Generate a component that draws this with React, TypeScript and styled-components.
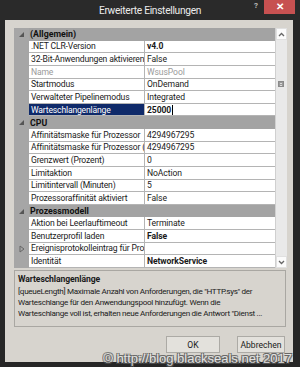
import React from "react";
import styled, { createGlobalStyle } from "styled-components";

const UI = `Roboto, "Liberation Sans", sans-serif`;

const Global = createGlobalStyle`
  html, body { margin: 0; padding: 0; background: #242424; }
  * { box-sizing: border-box; }
`;

const Window = styled.div`
  position: relative;
  width: 300px;
  height: 367px;
  background: #262626;
  display: flex;
  flex-direction: column;
  font-family: ${UI};
  overflow: hidden;
`;

const TitleBar = styled.div`
  height: 20px;
  display: flex;
  align-items: flex-start;
  background: #2a2a2a;
  padding-left: 52px;
`;

const Title = styled.div`
  flex: 1;
  text-align: center;
  color: #ececec;
  font-size: 10.2px;
  letter-spacing: -0.3px;
  line-height: 22px;
`;

const HelpBtn = styled.div`
  width: 16px;
  height: 14px;
  color: #bbb;
  font-size: 8px;
  font-weight: bold;
  text-align: center;
  line-height: 12px;
`;

const CloseBtn = styled.div`
  width: 31px;
  height: 14px;
  margin-right: 5px;
  background: #c75151;
  color: #fff;
  font-size: 10px;
  font-weight: bold;
  text-align: center;
  line-height: 14px;
`;

const Client = styled.div`
  flex: 1;
  margin: 0 7px 5px 5px;
  background: #d7d4ce;
  padding: 8px 6px 0 9px;
  display: flex;
  flex-direction: column;
`;

const Grid = styled.div`
  height: 240px;
  display: flex;
  background: #a6a6a6;
`;

const Rows = styled.div`
  flex: 1;
  display: flex;
  flex-direction: column;
`;

const Row = styled.div`
  flex: 1;
  display: flex;
  min-height: 0;
`;

const Strip = styled.div`
  width: 15px;
  display: flex;
  align-items: center;
  justify-content: center;
`;

const CatLabel = styled.div`
  flex: 1;
  font-size: 8.8px;
  font-weight: bold;
  color: #111;
  display: flex;
  align-items: center;
  padding-left: 1px;
  background: #a3a3a3;
`;

const NameCell = styled.div<{ $sel?: boolean; $dim?: boolean }>`
  width: 116px;
  font-size: 8.6px;
  letter-spacing: -0.17px;
  display: flex;
  align-items: center;
  padding-left: 2px;
  white-space: nowrap;
  overflow: hidden;
  background: ${(p) => (p.$sel ? "#0f2a6a" : "#fff")};
  color: ${(p) => (p.$sel ? "#fff" : p.$dim ? "#9a9a9a" : "#1a1a1a")};
  border-bottom: 1px solid #b4b4b4;
  border-right: 1px solid #b4b4b4;
`;

const ValueCell = styled.div<{ $bold?: boolean; $dim?: boolean }>`
  flex: 1;
  font-size: 8.6px;
  letter-spacing: -0.1px;
  display: flex;
  align-items: center;
  padding-left: 2px;
  white-space: nowrap;
  overflow: hidden;
  background: #fff;
  font-weight: ${(p) => (p.$bold ? "bold" : "normal")};
  color: ${(p) => (p.$dim ? "#9a9a9a" : "#1a1a1a")};
  border-bottom: 1px solid #b4b4b4;
`;

const Caret = styled.span`
  display: inline-block;
  width: 1px;
  height: 10px;
  background: #000;
  margin-left: 1px;
`;

const ScrollBar = styled.div`
  width: 12px;
  background: #e9e9e9;
  display: flex;
  flex-direction: column;
  border-left: 1px solid #d0d0d0;
`;

const ScrollArrow = styled.div`
  height: 12px;
  background: #fbfbfb;
  border: 1px solid #e0e0e0;
  display: flex;
  align-items: center;
  justify-content: center;
`;

const ScrollTrack = styled.div`
  flex: 1;
  position: relative;
`;

const Grip = styled.div`
  position: absolute;
  top: 41px;
  left: 2px;
  width: 6px;
  height: 6px;
  background: #9a9a9a;
  border: 1px solid #8a8a8a;
  display: flex;
  flex-direction: column;
  justify-content: space-around;
  padding: 0 1px;
  & > i {
    display: block;
    height: 1px;
    background: #dcdcdc;
  }
`;

const Description = styled.div`
  margin-top: 2px;
  height: 57px;
  border: 1px solid #a9a7a2;
  padding: 3px 3px 0 3px;
  margin-right: 1px;
  font-size: 8.1px;
  letter-spacing: -0.3px;
  color: #1a1a1a;
  line-height: 11px;
  white-space: nowrap;
  overflow: hidden;
`;

const DescTitle = styled.div`
  font-size: 8.6px;
  font-weight: bold;
  letter-spacing: -0.1px;
  margin-bottom: 1px;
`;

const ButtonRow = styled.div`
  margin-top: 9px;
  display: flex;
  justify-content: flex-end;
  gap: 17px;
  padding-right: 2px;
`;

const Button = styled.div<{ $w: number }>`
  width: ${(p) => p.$w}px;
  height: 17px;
  background: #e3e1dc;
  border: 1px solid #acaaa5;
  font-size: 8.6px;
  color: #1a1a1a;
  display: flex;
  align-items: center;
  justify-content: center;
`;

const Watermark = styled.div`
  position: absolute;
  right: 8px;
  bottom: 1px;
  font-family: "Liberation Sans", Arial, sans-serif;
  font-size: 13px;
  color: #e6e6e6;
  text-shadow: 1px 1px 0 #555, -1px -1px 0 #555, 1px -1px 0 #555, -1px 1px 0 #555;
  opacity: 0.85;
  white-space: nowrap;
`;

const CatGlyph = () => (
  <svg width="7" height="7" viewBox="0 0 7 7">
    <path d="M6 1 L6 6 L1 6 Z" fill="#555" />
  </svg>
);

const ExpandGlyph = () => (
  <svg width="6" height="8" viewBox="0 0 6 8">
    <path d="M1 1 L5 4 L1 7 Z" fill="none" stroke="#666" strokeWidth="1" />
  </svg>
);

const Chevron = ({ up }: { up?: boolean }) => (
  <svg width="7" height="5" viewBox="0 0 7 5">
    <path d={up ? "M1 4 L3.5 1.5 L6 4" : "M1 1 L3.5 3.5 L6 1"} fill="none" stroke="#666" strokeWidth="1.3" />
  </svg>
);

type Item =
  | { cat: string }
  | { name: string; value: string; bold?: boolean; dim?: boolean; sel?: boolean; expand?: boolean };

const items: Item[] = [
  { cat: "(Allgemein)" },
  { name: ".NET CLR-Version", value: "v4.0", bold: true },
  { name: "32-Bit-Anwendungen aktivieren", value: "False" },
  { name: "Name", value: "WsusPool", dim: true },
  { name: "Startmodus", value: "OnDemand" },
  { name: "Verwalteter Pipelinemodus", value: "Integrated" },
  { name: "Warteschlangenlänge", value: "25000", bold: true, sel: true },
  { cat: "CPU" },
  { name: "Affinitätsmaske für Prozessor", value: "4294967295" },
  { name: "Affinitätsmaske für Prozessor (64-Bit-Option)", value: "4294967295" },
  { name: "Grenzwert (Prozent)", value: "0" },
  { name: "Limitaktion", value: "NoAction" },
  { name: "Limitintervall (Minuten)", value: "5" },
  { name: "Prozessoraffinität aktiviert", value: "False" },
  { cat: "Prozessmodell" },
  { name: "Aktion bei Leerlauftimeout", value: "Terminate" },
  { name: "Benutzerprofil laden", value: "False", bold: true },
  { name: "Ereignisprotokolleintrag für Prozessmodell", value: "", expand: true },
  { name: "Identität", value: "NetworkService", bold: true },
];

export default function App() {
  return (
    <>
      <Global />
      <Window>
        <TitleBar>
          <Title>Erweiterte Einstellungen</Title>
          <HelpBtn>?</HelpBtn>
          <CloseBtn>✕</CloseBtn>
        </TitleBar>
        <Client>
          <Grid>
            <Rows>
              {items.map((it, i) =>
                "cat" in it ? (
                  <Row key={i}>
                    <Strip>
                      <CatGlyph />
                    </Strip>
                    <CatLabel>{it.cat}</CatLabel>
                  </Row>
                ) : (
                  <Row key={i}>
                    <Strip>{it.expand ? <ExpandGlyph /> : null}</Strip>
                    <NameCell $sel={it.sel} $dim={it.dim}>
                      {it.name}
                    </NameCell>
                    <ValueCell $bold={it.bold} $dim={it.dim}>
                      {it.value}
                      {it.sel ? <Caret /> : null}
                    </ValueCell>
                  </Row>
                )
              )}
            </Rows>
            <ScrollBar>
              <ScrollArrow>
                <Chevron up />
              </ScrollArrow>
              <ScrollTrack>
                <Grip>
                  <i />
                  <i />
                </Grip>
              </ScrollTrack>
              <ScrollArrow>
                <Chevron />
              </ScrollArrow>
            </ScrollBar>
          </Grid>
          <Description>
            <DescTitle>Warteschlangenlänge</DescTitle>
            [queueLength] Maximale Anzahl von Anforderungen, die "HTTP.sys" der
            <br />
            Warteschlange für den Anwendungspool hinzufügt. Wenn die
            <br />
            Warteschlange voll ist, erhalten neue Anforderungen die Antwort "Dienst ...
          </Description>
          <ButtonRow>
            <Button $w={54}>OK</Button>
            <Button $w={48}>Abbrechen</Button>
          </ButtonRow>
        </Client>
        <Watermark>© http://blog.blackseals.net 2017</Watermark>
      </Window>
    </>
  );
}
